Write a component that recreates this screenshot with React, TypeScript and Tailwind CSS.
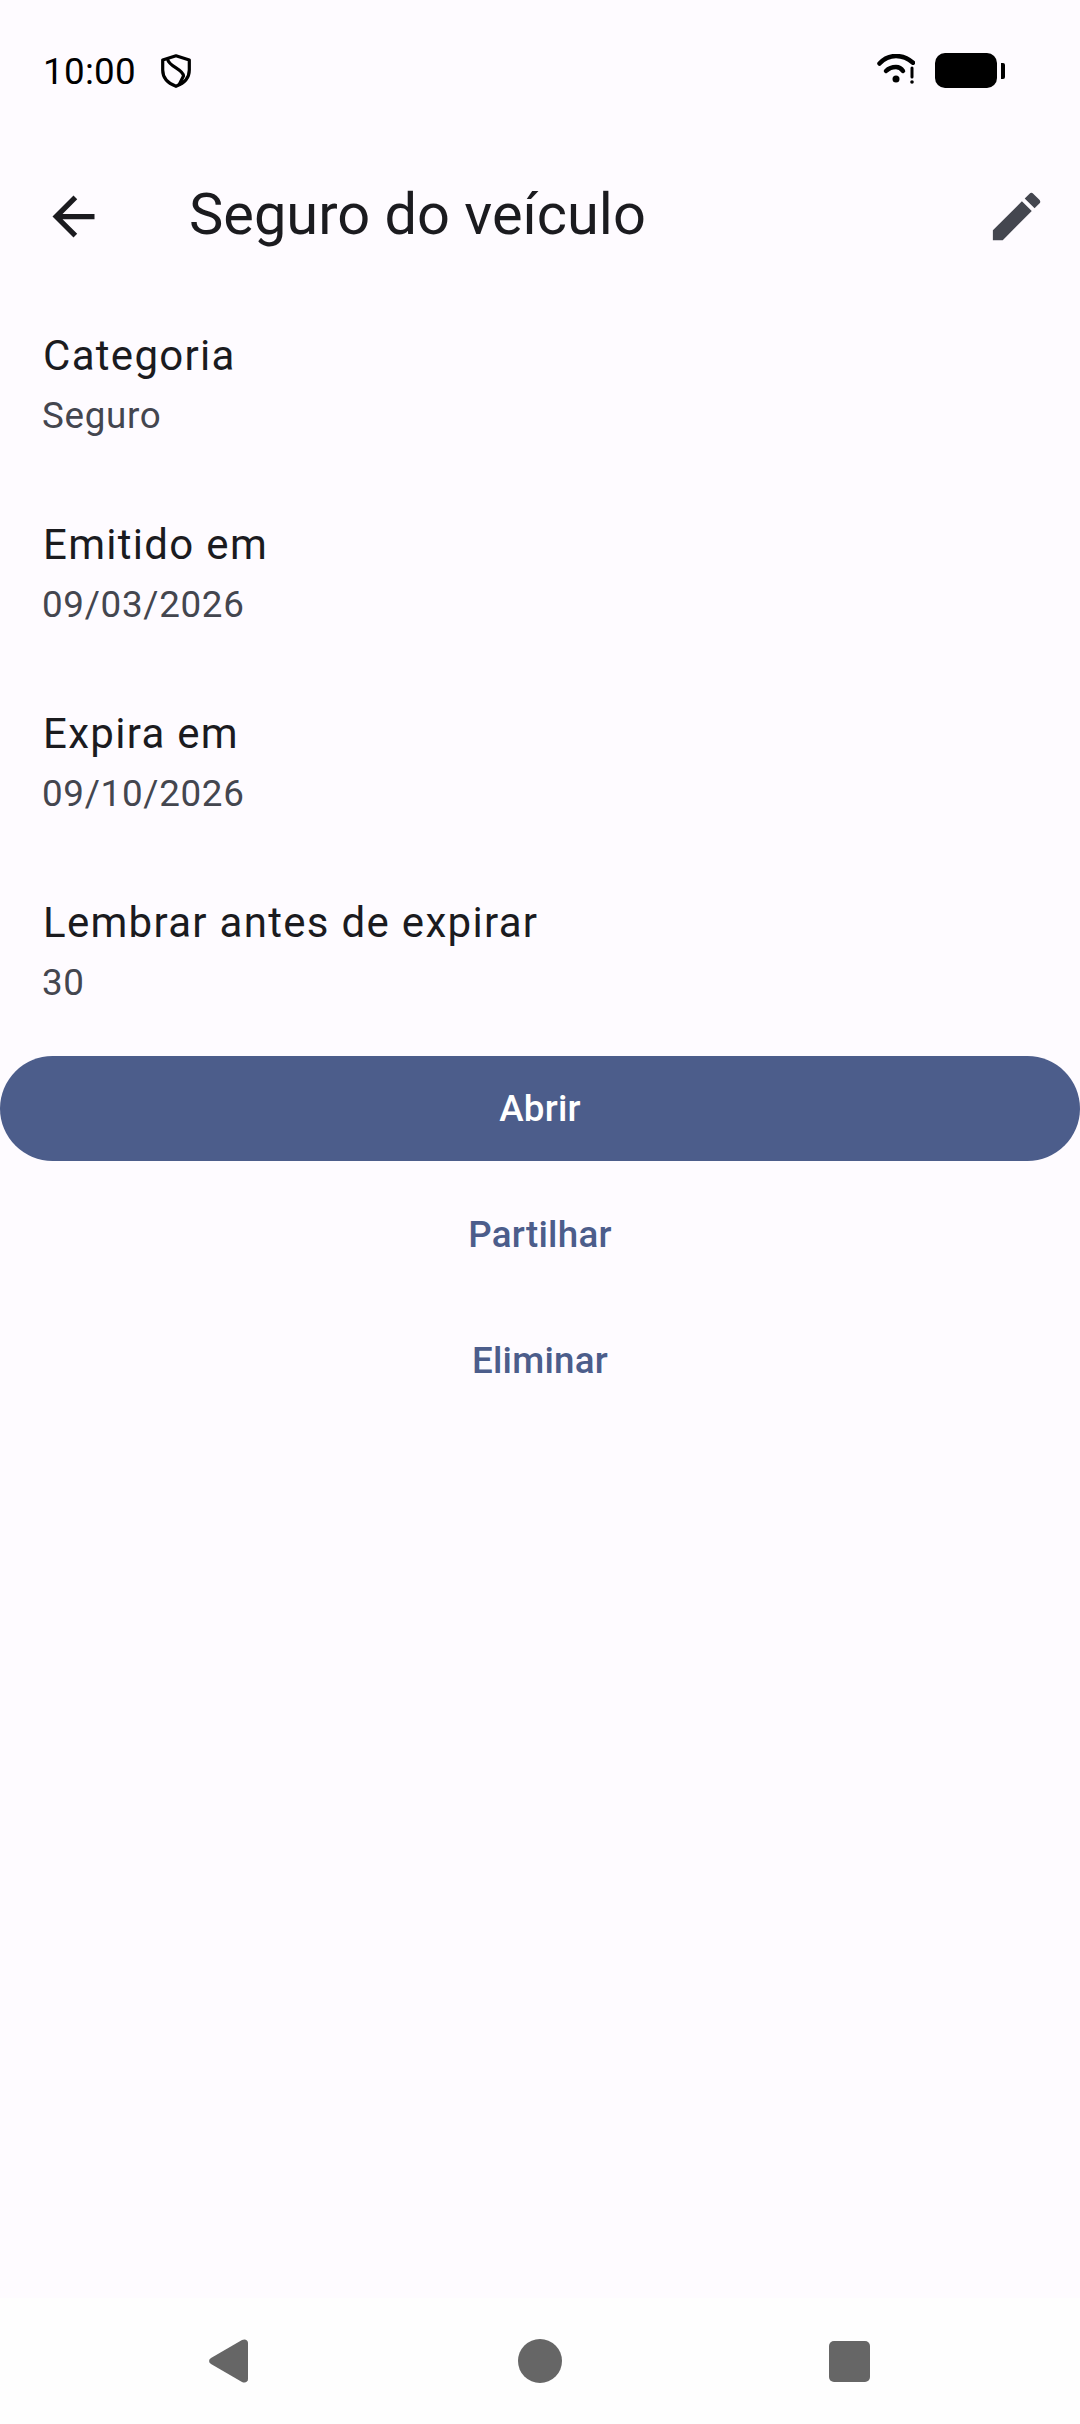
const details = [
  { label: "Categoria", value: "Seguro" },
  { label: "Emitido em", value: "09/03/2026" },
  { label: "Expira em", value: "09/10/2026" },
  { label: "Lembrar antes de expirar", value: "30" },
];

function StatusBar() {
  return (
    <div className="flex h-[144px] items-start justify-between pl-[43px] pr-[75px] pt-[50px] text-black">
      <div className="flex h-[40px] items-center gap-[25px]">
        <span className="mt-[3px] text-[36.75px] leading-[40px] tracking-[0.3px]">10:00</span>
        <svg className="mt-[2px] h-[34px] w-[30px]" viewBox="0 0 30 34" fill="none" stroke="black" strokeWidth="3.2">
          <path d="M15 1.8 L28.3 6 V16 C28.3 24 22.5 29.5 15 32.3 C7.5 29.5 1.7 24 1.7 16 V6 Z" strokeLinejoin="round" />
          <path d="M6.5 5 C8 13 22 15 22.5 22 L18 31" />
        </svg>
      </div>
      <div className="flex h-[40px] items-center gap-[20px]">
        <svg className="mb-[2px] h-[30px] w-[38px]" viewBox="0 0 38 30" fill="none" stroke="black" strokeLinecap="round">
          <path d="M2.5 9.5 C8 3.5 14 2 19 2 C24 2 30 3.5 36 8.7" strokeWidth="4.5" />
          <path d="M9 17 C12 14 16 13 19 13 C21 13 24 14 26 17" strokeWidth="4.5" />
          <circle cx="19" cy="25" r="3.5" fill="black" stroke="none" />
          <path d="M35 14 V23" strokeWidth="3" />
          <circle cx="35" cy="28" r="1.8" fill="black" stroke="none" />
        </svg>
        <div className="mt-[1px] flex items-center gap-[4px]">
          <div className="h-[35px] w-[62px] rounded-[10px] bg-black" />
          <div className="h-[16px] w-[4px] rounded-r-[2px] bg-black" />
        </div>
      </div>
    </div>
  );
}

function TopBar() {
  return (
    <div className="flex h-[144px] items-center pl-[42px] pr-[32px]">
      <svg className="h-[63px] w-[63px] shrink-0" viewBox="0 0 24 24" fill="#1b1b1f">
        <path d="M20 11H7.83l5.59-5.59L12 4l-8 8 8 8 1.41-1.41L7.83 13H20v-2z" />
      </svg>
      <h1 className="mb-[5px] ml-[84px] flex-1 text-[57.75px] leading-[72px] text-[#1b1b1f]">Seguro do veículo</h1>
      <svg className="h-[63px] w-[63px] shrink-0" viewBox="0 0 24 24" fill="#44464f">
        <path d="M3 17.25V21h3.75L17.81 9.94l-3.75-3.75L3 17.25zM20.71 7.04a1 1 0 0 0 0-1.41l-2.34-2.34a1 1 0 0 0-1.41 0l-1.83 1.83 3.75 3.75 1.83-1.83z" />
      </svg>
    </div>
  );
}

export default function App() {
  return (
    <div className="flex h-[2424px] w-[1080px] flex-col overflow-hidden bg-[#fefbff] font-['Roboto',sans-serif]">
      <StatusBar />
      <TopBar />

      <div className="flex flex-col">
        {details.map((item) => (
          <div key={item.label} className="flex h-[189px] flex-col justify-center px-[42px]">
            <p className="ml-[1px] text-[42px] leading-[63px] tracking-[1.3px] text-[#1b1b1f]">{item.label}</p>
            <p className="mt-[3px] text-[36.75px] leading-[52px] tracking-[0.7px] text-[#44464f]">{item.value}</p>
          </div>
        ))}
      </div>

      <button className="mt-[12px] h-[105px] w-full rounded-full bg-[#4c5d8b] text-[36.75px] font-medium tracking-[0.26px] text-white">
        Abrir
      </button>
      <button className="mt-[11px] h-[126px] w-full text-[36.75px] font-medium tracking-[0.26px] text-[#4c5d8b]">
        Partilhar
      </button>
      <button className="h-[126px] w-full text-[36.75px] font-medium tracking-[0.26px] text-[#4c5d8b]">
        Eliminar
      </button>

      <div className="mt-auto flex h-[126px] items-center justify-between bg-[#fefefe] pl-[208px] pr-[210px]">
        <svg className="h-[46px] w-[42px]" viewBox="0 0 42 46" fill="#666666">
          <path d="M3 20 L34 2 C37 0.5 40 2 40 5 V41 C40 44 37 45.5 34 44 L3 26 C0.5 24.5 0.5 21.5 3 20 Z" />
        </svg>
        <div className="h-[44px] w-[44px] rounded-full bg-[#666666]" />
        <div className="h-[41px] w-[41px] rounded-[5px] bg-[#666666]" />
      </div>
    </div>
  );
}
